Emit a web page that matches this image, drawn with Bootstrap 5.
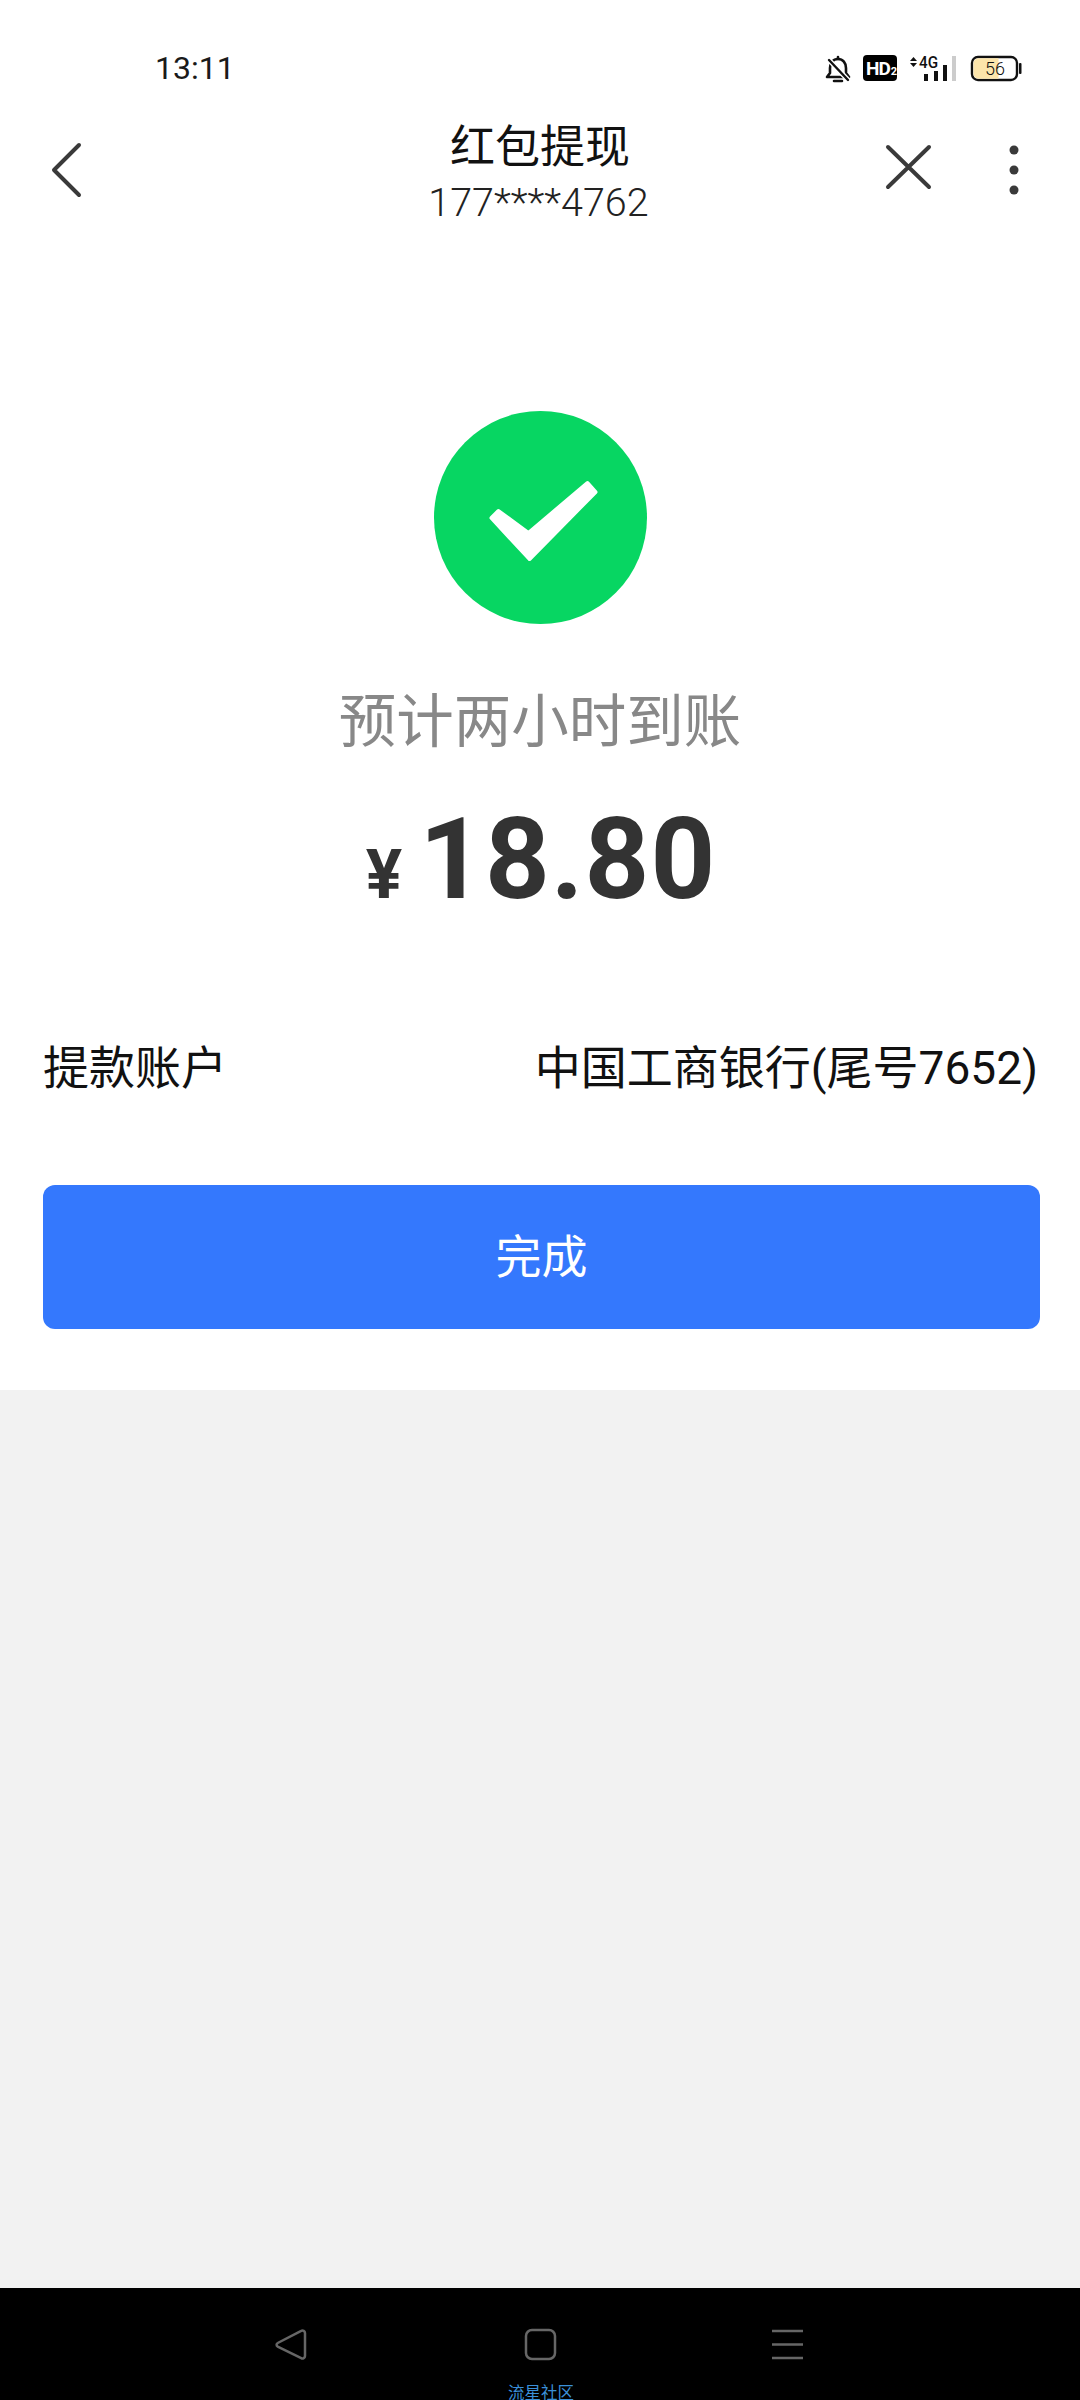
<!DOCTYPE html>
<html lang="zh-CN">
<head>
  <meta charset="UTF-8">
  <title>红包提现</title>
  <meta name="viewport" content="width=device-width, initial-scale=1.0">
  <link href="https://cdn.jsdelivr.net/npm/bootstrap@5.3.3/dist/css/bootstrap.min.css" rel="stylesheet">
  <style>
    html, body { margin: 0; background: #fff; }
    body { font-family: Roboto, "Noto Sans CJK SC", sans-serif; color: #111; }
    .screen { width: 1080px; height: 2400px; overflow: hidden; }
    .status-bar { height: 100px; padding: 0 0 0 155px; }
    .status-time { font-size: 32px; line-height: 36px; margin-top: 50px; color: #1a1a1a; }
    .status-icons { width: 200px; height: 100px; margin-right: 58px; }
    .status-icons svg { display: block; margin-top: 50px; }
    .title-bar { height: 130px; }
    .title-side { width: 200px; height: 130px; }
    .title-side svg { display: block; }
    .title-mid { line-height: 1; padding-top: 23px; }
    .title-main { font-size: 45px; line-height: 50px; color: #111; }
    .title-sub { font-size: 39.5px; line-height: 44px; margin-top: 8px; padding-right: 3px; color: #222; font-weight: 300; }
    .result-wrap { height: 1160px; }
    .ok-icon { display: block; margin: 181px auto 0; }
    .eta-text { font-size: 57.5px; line-height: 80px; color: #888; margin-top: 59px; }
    .amount-line { margin-top: 41px; height: 112px; line-height: 112px; color: #333; font-weight: 700; padding-left: 2px; }
    .amount-unit { font-size: 68px; margin-right: 17px; }
    .amount-num { font-size: 113px; letter-spacing: 1px; }
    .account-row { padding: 0 42px 0 43px; margin-top: 122px; font-size: 46px; line-height: 60px; color: #111; }
    .done-btn { display: block; width: 997px; height: 144px; margin: 87px 0 0 43px; background: #3478fd; border: 0; border-radius: 12px; color: #fff; font-size: 46px; }
    .grey-fill { background: #f2f2f2; }
    .sys-nav { height: 112px; background: #000; }
    .sys-icons { height: 98px; }
    .sys-label { color: #3a8fd8; font-size: 16.5px; line-height: 20px; margin-top: -2px; padding-left: 2px; }
  </style>
</head>
<body>
  <div class="screen d-flex flex-column">
    <div class="status-bar d-flex justify-content-between">
      <div class="status-time">13:11</div>
      <div class="status-icons">
        <svg width="200" height="36" viewBox="822 50 200 36">
          <!-- bell muted -->
          <path d="M838 59c-5 0-8 4-8 9v5l-3 4h22l-3-4v-5c0-5-3-9-8-9z" fill="none" stroke="#111" stroke-width="2.6" stroke-linejoin="round"/>
          <path d="M834 81h8M838 57v2" stroke="#111" stroke-width="2.6" stroke-linecap="round"/>
          <path d="M829 60l20 21" stroke="#fff" stroke-width="5"/>
          <path d="M829 60l19 20" stroke="#111" stroke-width="2.4" stroke-linecap="round"/>
          <!-- hd -->
          <rect x="863" y="55" width="34" height="26" rx="4" fill="#000"/>
          <text x="866" y="75" font-family="Roboto" font-weight="700" font-size="19" fill="#fff">H<tspan dx="-1">D</tspan><tspan font-size="11" dx="0">2</tspan></text>
          <!-- 4g -->
          <path d="M910 61l3.5-4 3.5 4zM910 63l3.5 4 3.5-4z" fill="#111"/>
          <text x="919" y="68" font-family="Roboto" font-size="17" font-weight="500" fill="#111" textLength="19" lengthAdjust="spacingAndGlyphs">4G</text>
          <rect x="924" y="74" width="4" height="7" fill="#111"/>
          <rect x="934" y="71" width="4" height="10" fill="#111"/>
          <rect x="943" y="65" width="4" height="16" fill="#111"/>
          <rect x="952" y="56" width="4" height="25" fill="#ccc"/>
          <!-- battery -->
          <rect x="972" y="57" width="45" height="23" rx="6" fill="#fff" stroke="#111" stroke-width="2.4"/>
          <path d="M973.500 63.500a5 5 0 0 1 5-5.200h20v20.400h-20a5 5 0 0 1-5-5z" fill="#fce5ab"/>
          <rect x="1019" y="63" width="2.500" height="11" rx="1" fill="#111"/>
          <text x="985" y="75" font-family="Roboto" font-weight="300" font-size="18" fill="#111">56</text>
        </svg>
      </div>
    </div>

    <div class="title-bar d-flex align-items-start">
      <div class="title-side">
        <svg width="200" height="130" viewBox="0 100 200 130">
          <path d="M79 145l-25 25 25 25" fill="none" stroke="#3a3a3a" stroke-width="4" stroke-linecap="round" stroke-linejoin="round"/>
        </svg>
      </div>
      <div class="title-mid flex-grow-1 text-center">
        <div class="title-main">红包提现</div>
        <div class="title-sub">177****4762</div>
      </div>
      <div class="title-side">
        <svg width="200" height="130" viewBox="880 100 200 130">
          <path d="M888 147l41 40M929 147l-41 40" fill="none" stroke="#3a3a3a" stroke-width="4" stroke-linecap="round"/>
          <circle cx="1014" cy="150" r="4.500" fill="#3a3a3a"/>
          <circle cx="1014" cy="170" r="4.500" fill="#3a3a3a"/>
          <circle cx="1014" cy="190" r="4.500" fill="#3a3a3a"/>
        </svg>
      </div>
    </div>

    <div class="result-wrap">
      <svg class="ok-icon" width="213" height="213" viewBox="434.500 411 213 213">
        <circle cx="541" cy="517.500" r="106.500" fill="#07d662"/>
        <path d="M492 518l7-7 30 22 59-50 8 9-66 67z" fill="#fff" stroke="#fff" stroke-width="4" stroke-linejoin="round"/>
      </svg>
      <div class="eta-text text-center">预计两小时到账</div>
      <div class="amount-line text-center">
        <span class="amount-unit">¥</span><span class="amount-num">18.80</span>
      </div>
      <div class="account-row d-flex justify-content-between">
        <span>提款账户</span>
        <span>中国工商银行(尾号7652)</span>
      </div>
      <button type="button" class="done-btn">完成</button>
    </div>

    <div class="grey-fill flex-grow-1"></div>

    <div class="sys-nav">
      <div class="sys-icons">
        <svg width="1080" height="98" viewBox="0 2288 1080 98">
          <path d="M305 2333v23a2.500 2.500 0 0 1-3.800 2.100l-23.500-11.500a2 2 0 0 1 0-3.600l23.500-12.100a2.500 2.500 0 0 1 3.800 2.100z" fill="none" stroke="#666" stroke-width="2.500"/>
          <rect x="526" y="2330" width="29" height="29" rx="6" fill="none" stroke="#666" stroke-width="2.500"/>
          <path d="M772 2331h31M772 2344.500h31M772 2358h31" stroke="#666" stroke-width="2.500"/>
        </svg>
      </div>
      <div class="sys-label text-center">流星社区</div>
    </div>
  </div>
  <script src="https://cdn.jsdelivr.net/npm/bootstrap@5.3.3/dist/js/bootstrap.bundle.min.js"></script>
</body>
</html>
